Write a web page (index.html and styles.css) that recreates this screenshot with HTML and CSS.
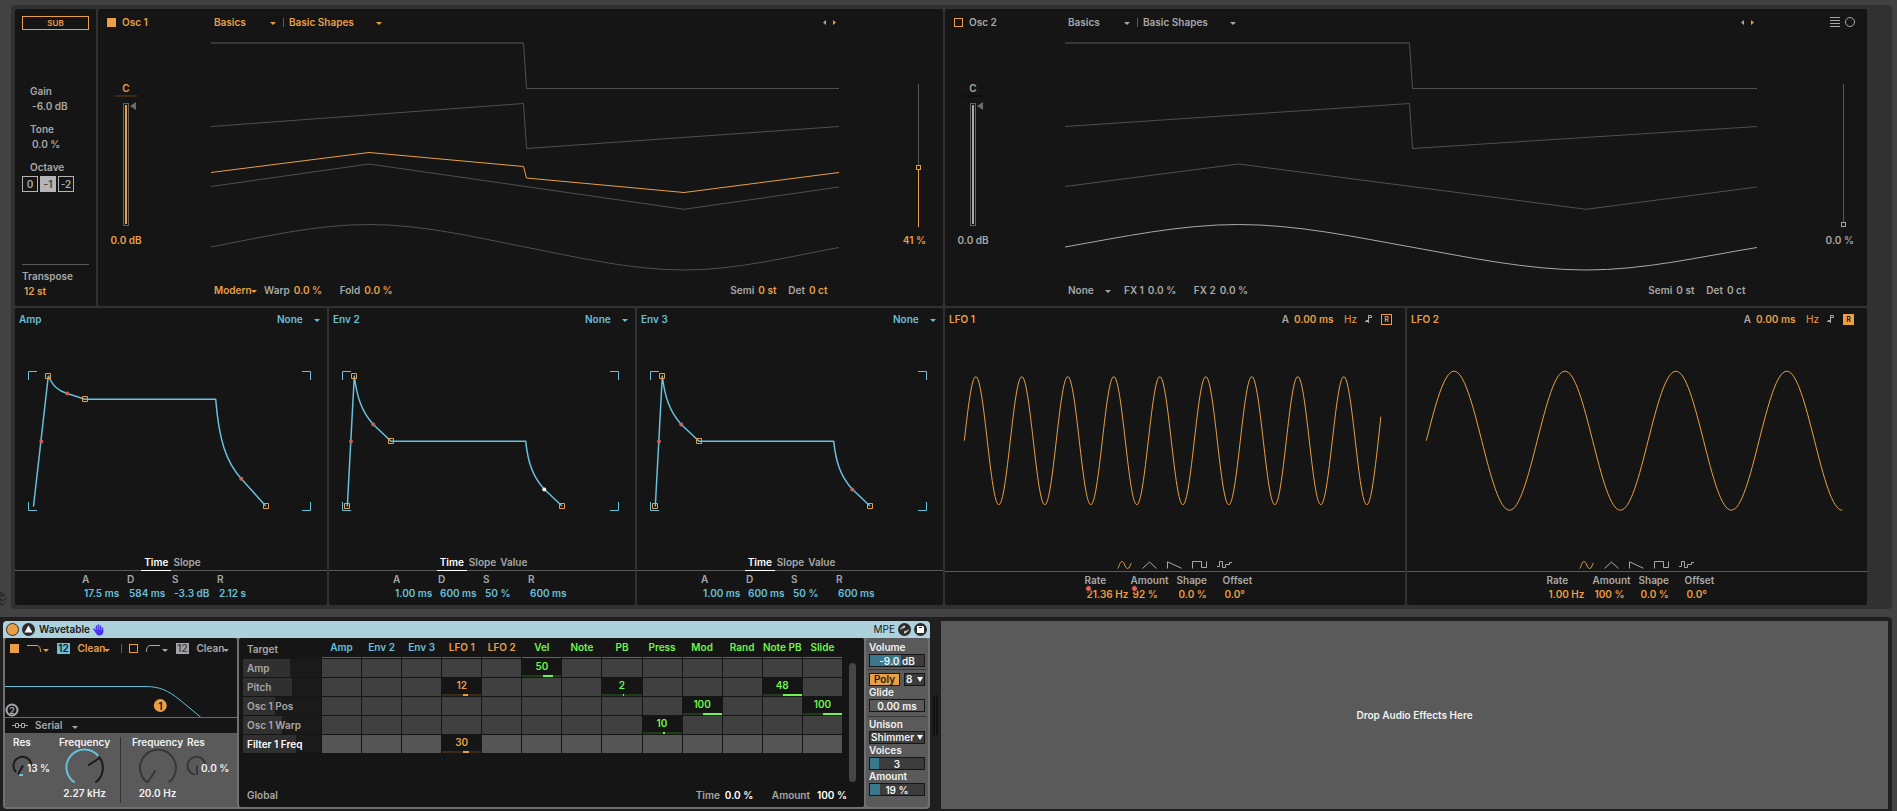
FILE: index.html
```html
<!DOCTYPE html>
<html lang="en">
<head>
<meta charset="utf-8">
<title>Wavetable</title>
<link rel="stylesheet" href="styles.css">
</head>
<body>
<svg class="defs" aria-hidden="true">
  <defs>
    <symbol id="i-sine" viewBox="0 0 15 8"><path d="M.5 7.5C2.500 6 2.500 .5 5 .5S8 7.500 10.500 7.500C13 7.500 13 3 14.500 2"/></symbol>
    <symbol id="i-tri" viewBox="0 0 15 8"><path d="M.5 7.5L7.5 1L14.5 7.5"/></symbol>
    <symbol id="i-saw" viewBox="0 0 15 8"><path d="M.5 7.5V.8L14.5 7.3"/></symbol>
    <symbol id="i-square" viewBox="0 0 15 8"><path d="M.5 7.5V.5H9.5V6.5H14.5V.5"/></symbol>
    <symbol id="i-random" viewBox="0 0 15 8"><path d="M0 5.5H2.5V.5H5.5V6.5H8.5V3.5H12.5V1.5H15"/></symbol>
    <symbol id="i-note" viewBox="0 0 7 8"><path d="M0 6.5H3M1 5.5H3M3.5 8V0M4 .5H6.5M4 2.5H6M6.5 1V3"/></symbol>
    <symbol id="i-prev" viewBox="0 0 3 5"><path d="M3 0V5L0 2.5Z"/></symbol>
    <symbol id="i-next" viewBox="0 0 3 5"><path d="M0 0V5L3 2.5Z"/></symbol>
  </defs>
</svg>

<button class="fold" aria-label="Toggle view"><svg viewBox="0 0 14 14"><path d="M8 5L10 7L13 4M8 9L10 11L13 8"/></svg></button>

<main class="rack">
  <div class="row row-osc">
    <section class="panel sub">
      <button class="sub-btn">SUB</button>
      <div class="sub-params">
        <label>Gain<input class="num" value="-6.0 dB"></label>
        <label>Tone<input class="num" value="0.0 %"></label>
        <div class="octave-label">Octave</div>
      </div>
      <div class="octave"><button>0</button><button class="on">-1</button><button>-2</button></div>
      <label class="transpose">Transpose<input class="num orange" value="12 st"></label>
    </section>

    <section class="panel osc osc1">
      <label class="osc-name"><input type="checkbox" checked>Osc 1</label>
      <div class="osc-head">
        <span class="pick w-cat"><select aria-label="Category"><option>Basics</option></select></span>
        <i class="bar"></i>
        <span class="pick w-shape"><select aria-label="Wavetable"><option>Basic Shapes</option></select></span>
        <div class="nav"><button class="dim" aria-label="Previous"><svg><use href="#i-prev"/></svg></button><button aria-label="Next"><svg><use href="#i-next"/></svg></button></div>
      </div>
      <div></div>
      <div class="gain">
        <span class="pan">C</span>
        <div class="gain-track"><input type="range" class="gain-range" aria-label="Gain" value="100"><i class="gain-mark"></i></div>
        <span>0.0 dB</span>
      </div>
      <svg class="wave" viewBox="0 0 628 241" preserveAspectRatio="none">
        <path class="thick" d="M0 8H312.5"/>
        <path d="M312.5 8L315.5 53.5H628M0 91.5L312.5 68.5L315.5 113.5L628 91.5M0 151.5L158 129L473 174.300L628 152M0 212C52 202 105 189.500 158 189.500S263 202 314 212S420 235 473 235S576 222 628 212.500"/>
        <path class="live" d="M0 137.500L158 117.500L312.500 131.500L315.500 143L473 157.500L628 137.500"/>
      </svg>
      <div class="position"><input type="range" class="pos-range" aria-label="Position" value="41"><span>41 %</span></div>
      <div></div>
      <div class="osc-foot">
        <span class="pick w-mode"><select aria-label="Effect mode"><option>Modern</option></select></span>
        <label>Warp<input class="num" value="0.0 %"></label>
        <label>Fold<input class="num" value="0.0 %"></label>
        <div class="tune"><label>Semi<input class="num" value="0 st"></label><label>Det<input class="num" value="0 ct"></label></div>
      </div>
      <div></div>
    </section>

    <section class="panel osc osc2">
      <label class="osc-name"><input type="checkbox">Osc 2</label>
      <div class="osc-head">
        <span class="pick w-cat"><select aria-label="Category"><option>Basics</option></select></span>
        <i class="bar"></i>
        <span class="pick w-shape"><select aria-label="Wavetable"><option>Basic Shapes</option></select></span>
        <div class="nav"><button class="dim" aria-label="Previous"><svg><use href="#i-prev"/></svg></button><button class="orange" aria-label="Next"><svg><use href="#i-next"/></svg></button></div>
      </div>
      <div class="views">
        <button aria-label="Linear view"><svg viewBox="0 0 10 10"><path d="M0 .5H10M0 3.500H10M0 6.500H10M0 9.500H10"/></svg></button>
        <button aria-label="Polar view"><svg viewBox="0 0 10 10"><circle cx="5" cy="5" r="4.500"/></svg></button>
      </div>
      <div class="gain">
        <span class="pan">C</span>
        <div class="gain-track"><input type="range" class="gain-range" aria-label="Gain" value="100"><i class="gain-mark"></i></div>
        <span>0.0 dB</span>
      </div>
      <svg class="wave" viewBox="0 0 692 241" preserveAspectRatio="none">
        <path class="thick" d="M0 8H344.500"/>
        <path d="M344.500 8L347.500 53.500H692M0 91.500L344.500 68.500L347.500 113.500L692 91.500M0 151.500L173.500 129L521 174.300L692 152"/>
        <path class="live" d="M0 212C57 202 115 189.500 173.500 189.500S290 202 346 212S463 235 521 235S634 222 692 212.500"/>
      </svg>
      <div class="position"><input type="range" class="pos-range" aria-label="Position" value="0"><span>0.0 %</span></div>
      <div></div>
      <div class="osc-foot">
        <span class="pick w-mode"><select aria-label="Effect mode"><option>None</option></select></span>
        <label>FX 1<input class="num" value="0.0 %"></label>
        <label>FX 2<input class="num" value="0.0 %"></label>
        <div class="tune"><label>Semi<input class="num" value="0 st"></label><label>Det<input class="num" value="0 ct"></label></div>
      </div>
      <div></div>
    </section>
  </div>

  <div class="row row-mod">
    <section class="panel mod env">
      <header><h2>Amp</h2><span class="pick w-mode"><select aria-label="Amp loop mode"><option>None</option></select></span></header>
      <svg class="graph" viewBox="0 0 312 222" preserveAspectRatio="none">
        <path d="M13.500 50V41.500H22M287 41.500H295.500V50M295.500 172V180.500H287M22 180.500H13.500V172"/>
        <path class="curve" d="M18.500 176.500L33.300 46C38 56 43 61 52.300 63.500L70 69.300H200.700C204 110 211 132 226.300 148.700L250.700 176"/>
        <g class="dots"><circle cx="26.300" cy="111.500" r="2"/><circle cx="52.300" cy="63.500" r="2"/><circle cx="226.300" cy="148.700" r="2"/></g>
        <path class="nodes" d="M30.500 43.500h5v5h-5zM67.500 66.500h5v5h-5zM248.500 173.500h5v5h-5z"/>
      </svg>
      <nav><button class="on">Time</button><button>Slope</button></nav>
      <footer>
        <label>A<input class="num" value="17.5 ms"></label><label>D<input class="num" value="584 ms"></label><label>S<input class="num" value="-3.3 dB"></label><label>R<input class="num" value="2.12 s"></label>
      </footer>
    </section>
    <section class="panel mod env">
      <header><h2>Env 2</h2><span class="pick w-mode"><select aria-label="Env 2 loop mode"><option>None</option></select></span></header>
      <svg class="graph" viewBox="0 0 306 222" preserveAspectRatio="none">
        <path d="M13.500 50V41.500H22M281 41.500H289.500V50M289.500 172V180.500H281M22 180.500H13.500V172"/>
        <path class="curve" d="M18.300 176.500L25.300 46C28 68 33 82 44.300 94.500L62 111.300H196.700C199 133 204 147 215.300 159.300L233 176"/>
        <g class="dots"><circle cx="22" cy="111.500" r="2"/><circle cx="44.300" cy="94.500" r="2"/><circle class="hot" cx="215.300" cy="159.500" r="2"/></g>
        <path class="nodes" d="M15.500 173.500h5v5h-5zM22.500 43.500h5v5h-5zM59.500 108.500h5v5h-5zM230.500 173.500h5v5h-5z"/>
      </svg>
      <nav><button class="on">Time</button><button>Slope</button><button>Value</button></nav>
      <footer>
        <label>A<input class="num" value="1.00 ms"></label><label>D<input class="num" value="600 ms"></label><label>S<input class="num" value="50 %"></label><label>R<input class="num" value="600 ms"></label>
      </footer>
    </section>
    <section class="panel mod env">
      <header><h2>Env 3</h2><span class="pick w-mode"><select aria-label="Env 3 loop mode"><option>None</option></select></span></header>
      <svg class="graph" viewBox="0 0 306 222" preserveAspectRatio="none">
        <path d="M13.500 50V41.500H22M281 41.500H289.500V50M289.500 172V180.500H281M22 180.500H13.500V172"/>
        <path class="curve" d="M18.300 176.500L25.300 46C28 68 33 82 44.300 94.500L62 111.300H196.700C199 133 204 147 215.300 159.300L233 176"/>
        <g class="dots"><circle cx="22" cy="111.500" r="2"/><circle cx="44.300" cy="94.500" r="2"/><circle cx="215.300" cy="159.500" r="2"/></g>
        <path class="nodes" d="M15.500 173.500h5v5h-5zM22.500 43.500h5v5h-5zM59.500 108.500h5v5h-5zM230.500 173.500h5v5h-5z"/>
      </svg>
      <nav><button class="on">Time</button><button>Slope</button><button>Value</button></nav>
      <footer>
        <label>A<input class="num" value="1.00 ms"></label><label>D<input class="num" value="600 ms"></label><label>S<input class="num" value="50 %"></label><label>R<input class="num" value="600 ms"></label>
      </footer>
    </section>
    <section class="panel mod lfo">
      <header><h2>LFO 1</h2><label>A<input class="num" value="0.00 ms"></label><button class="hz">Hz</button><button class="note" aria-label="Sync"><svg><use href="#i-note"/></svg></button><button class="retrig">R</button></header>
      <svg class="graph" viewBox="0 0 460 222" preserveAspectRatio="none">
        <path class="lfo-line" d="M19.300 110.700c3.750 -32.800 7.340 -64 11.500 -64s7.750 31.200 11.500 64s7.340 64 11.500 64s7.750 -31.200 11.500 -64s7.340 -64 11.500 -64s7.750 31.200 11.500 64s7.340 64 11.500 64s7.750 -31.200 11.500 -64s7.340 -64 11.500 -64s7.750 31.200 11.500 64s7.340 64 11.500 64s7.750 -31.200 11.500 -64s7.340 -64 11.500 -64s7.750 31.200 11.500 64s7.340 64 11.500 64s7.750 -31.200 11.500 -64s7.340 -64 11.500 -64s7.750 31.200 11.500 64s7.340 64 11.500 64s7.750 -31.200 11.500 -64s7.340 -64 11.500 -64s7.750 31.200 11.500 64s7.340 64 11.500 64s7.750 -31.200 11.500 -64s7.340 -64 11.500 -64s7.750 31.200 11.500 64s7.340 64 11.500 64s7.750 -31.200 11.500 -64s7.340 -64 11.500 -64s7.750 31.200 11.500 64s7.340 64 11.500 64s7.750 -31.200 11.500 -64s7.340 -64 11.500 -64s7.750 31.200 11.500 64s7.340 64 11.500 64s7.750 -31.200 11.500 -64l2.500 -24"/>
      </svg>
      <div class="shapes"><button class="on" aria-label="Sine"><svg><use href="#i-sine"/></svg></button><button aria-label="Triangle"><svg><use href="#i-tri"/></svg></button><button aria-label="Saw"><svg><use href="#i-saw"/></svg></button><button aria-label="Square"><svg><use href="#i-square"/></svg></button><button aria-label="Random"><svg><use href="#i-random"/></svg></button></div>
      <footer>
        <label class="auto">Rate<input class="num" value="21.36 Hz"></label><label class="auto">Amount<input class="num" value="92 %"></label><label>Shape<input class="num" value="0.0 %"></label><label>Offset<input class="num" value="0.0°"></label>
      </footer>
    </section>
    <section class="panel mod lfo">
      <header><h2>LFO 2</h2><label>A<input class="num" value="0.00 ms"></label><button class="hz">Hz</button><button class="note" aria-label="Sync"><svg><use href="#i-note"/></svg></button><button class="retrig on">R</button></header>
      <svg class="graph" viewBox="0 0 460 222" preserveAspectRatio="none">
        <path class="lfo-line" d="M19.300 110.700c9.040 -35.700 17.700 -69.500 27.730 -69.500s18.690 33.800 27.730 69.500s17.700 69.500 27.730 69.500s18.690 -33.800 27.730 -69.500s17.700 -69.500 27.730 -69.500s18.690 33.800 27.730 69.500s17.700 69.500 27.730 69.500s18.690 -33.800 27.730 -69.500s17.700 -69.500 27.730 -69.500s18.690 33.800 27.730 69.500s17.700 69.500 27.730 69.500s18.690 -33.800 27.730 -69.500s17.700 -69.500 27.730 -69.500s18.690 33.800 27.730 69.500s17.700 69.500 27.730 69.500"/>
      </svg>
      <div class="shapes"><button class="on" aria-label="Sine"><svg><use href="#i-sine"/></svg></button><button aria-label="Triangle"><svg><use href="#i-tri"/></svg></button><button aria-label="Saw"><svg><use href="#i-saw"/></svg></button><button aria-label="Square"><svg><use href="#i-square"/></svg></button><button aria-label="Random"><svg><use href="#i-random"/></svg></button></div>
      <footer>
        <label>Rate<input class="num" value="1.00 Hz"></label><label>Amount<input class="num" value="100 %"></label><label>Shape<input class="num" value="0.0 %"></label><label>Offset<input class="num" value="0.0°"></label>
      </footer>
    </section>
  </div>
</main>

<div class="dock">
  <section class="device">
    <header class="title">
      <button class="power" aria-label="Device on"></button>
      <button class="round" aria-label="Unfold"><svg viewBox="0 0 13 13"><path class="solid" d="M6.500 2.500L10.500 9.500H2.500Z"/></svg></button>
      <h1>Wavetable</h1>
      <svg class="hand" viewBox="0 0 11 12"><path d="M3.500 7V2M5.500 6V1M7.500 6.500V2M9.500 8V4M1 5L3.500 8.500"/><path class="palm" d="M2.700 6H10.200V8C10.200 10 9 11.500 7 11.500H5.800C4.500 11.500 3.500 10.500 2.700 8.500Z"/></svg>
      <span class="mpe">MPE</span>
      <button class="round" aria-label="Hot swap"><svg viewBox="0 0 13 13"><path d="M2.800 6.500C3 4.500 4.500 3.500 6.500 4L6 2.500M6.500 4L5 5.500M10.200 6.500C10 8.500 8.500 9.500 6.500 9L7 10.500M6.500 9L8 7.500"/></svg></button>
      <button class="round" aria-label="Save preset"><svg viewBox="0 0 13 13"><path class="solid" d="M3 3H9L10 4V10H3Z"/><path class="slot" d="M5 4.500H8"/></svg></button>
    </header>
    <div class="device-body">
      <div class="filters">
        <div class="filter-head">
          <input type="checkbox" checked aria-label="Filter 1">
          <span class="pick w-type orange"><svg class="ftype" viewBox="0 0 14 8"><path d="M0 .5H9C12 .5 13.500 2 13.500 7"/></svg><select aria-label="Filter 1 type"><option></option></select></span>
          <button class="slope">12</button>
          <span class="pick w-clean orange"><select aria-label="Filter 1 circuit"><option>Clean</option></select></span>
          <i class="bar"></i>
          <input type="checkbox" aria-label="Filter 2">
          <span class="pick w-type"><svg class="ftype" viewBox="0 0 14 8"><path d="M14 .5H5C2 .5 .5 2 .5 7"/></svg><select aria-label="Filter 2 type"><option></option></select></span>
          <button class="slope off">12</button>
          <span class="pick w-clean"><select aria-label="Filter 2 circuit"><option>Clean</option></select></span>
        </div>
        <svg class="response" viewBox="0 0 232 58" preserveAspectRatio="none">
          <path d="M0 27.500H140C155 27.500 163 31.500 175 41L195.500 58"/>
          <circle class="f1" cx="155.300" cy="46.500" r="6.500"/><text x="155.300" y="50.500">1</text>
          <circle class="f2" cx="7" cy="51" r="5.500"/><text class="t2" x="7" y="54.500">2</text>
        </svg>
        <div class="routing">
          <svg viewBox="0 0 16 5"><path d="M0 2.500H3M6 2.500H9.500M13 2.500H16M3.500 .5h3v4h-3zM9.500 .5h3v4h-3z"/></svg>
          <span class="pick w-route"><select aria-label="Routing"><option>Serial</option></select></span>
        </div>
        <div class="knobs">
          <div class="res"><span>Res</span><div><svg viewBox="0 0 20 20"><path d="M3 16A9 9 0 1 1 18.500 10"/><path class="lit" d="M6 19H10"/><path d="M10 9.500L5 18.500"/></svg><b>13 %</b></div></div>
          <div class="freq"><span>Frequency</span><svg viewBox="0 0 38 38"><path d="M29.400 33.500A18 18 0 0 0 32.500 7.200"/><path class="lit" d="M8.600 33.500A18 18 0 1 1 32.500 7.200"/><path d="M22 16.500L33.500 9"/></svg><b>2.27 kHz</b></div>
          <i></i>
          <div class="freq off"><span>Frequency</span><svg viewBox="0 0 38 38"><path d="M8.600 33.500A18 18 0 1 1 29.400 33.500M8.600 33.500L16.500 21.500"/></svg><b>20.0 Hz</b></div>
          <div class="res off"><span>Res</span><div><svg viewBox="0 0 20 20"><path d="M8 18.700A9 9 0 1 1 18.500 10M10 9.500V19"/></svg><b>0.0 %</b></div></div>
        </div>
      </div>

      <div class="matrix">
        <div class="matrix-main">
          <table>
            <thead><tr><th class="target">Target</th><th class="b">Amp</th><th class="b">Env 2</th><th class="b">Env 3</th><th class="o">LFO 1</th><th class="o">LFO 2</th><th class="g">Vel</th><th class="g">Note</th><th class="g">PB</th><th class="g">Press</th><th class="g">Mod</th><th class="g">Rand</th><th class="g">Note PB</th><th class="g">Slide</th></tr></thead>
            <tbody>
              <tr><th style="--w:47px">Amp</th><td></td><td></td><td></td><td></td><td></td><td class="g" style="--v:10px">50</td><td></td><td></td><td></td><td></td><td></td><td></td><td></td></tr>
              <tr><th style="--w:49px">Pitch</th><td></td><td></td><td></td><td class="o" style="--v:5px">12</td><td></td><td></td><td></td><td class="g" style="--v:1px">2</td><td></td><td></td><td></td><td class="g" style="--v:19px">48</td><td></td></tr>
              <tr><th style="--w:32px">Osc 1 Pos</th><td></td><td></td><td></td><td></td><td></td><td></td><td></td><td></td><td></td><td class="g" style="--v:19px">100</td><td></td><td></td><td class="g" style="--v:19px">100</td></tr>
              <tr><th style="--w:39px">Osc 1 Warp</th><td></td><td></td><td></td><td></td><td></td><td></td><td></td><td></td><td class="g" style="--v:2px">10</td><td></td><td></td><td></td><td></td></tr>
              <tr class="sel"><th style="--w:53px">Filter 1 Freq</th><td></td><td></td><td></td><td class="o" style="--v:6px">30</td><td></td><td></td><td></td><td></td><td></td><td></td><td></td><td></td><td></td></tr>
            </tbody>
          </table>
          <i class="scroll"></i>
        </div>
        <div class="global"><span>Global</span><label>Time<input class="num" value="0.0 %"></label><label>Amount<input class="num last" value="100 %"></label></div>
      </div>

      <div class="controls">
        <label>Volume<input class="box" value="-9.0 dB" style="--f:58%"></label>
        <hr>
        <div class="poly"><button>Poly</button><span class="drop"><select aria-label="Voice count"><option>8</option></select></span></div>
        <label>Glide<input class="box flat" value="0.00 ms"></label>
        <hr class="low">
        <label>Unison<span class="drop"><select><option>Shimmer</option></select></span></label>
        <label>Voices<input class="box" value="3" style="--f:17%"></label>
        <label>Amount<input class="box" value="19 %" style="--f:19%"></label>
      </div>
    </div>
  </section>
  <div class="meter"></div>
  <section class="dropzone">Drop Audio Effects Here</section>
</div>
</body>
</html>
```

FILE: styles.css
```css
:root {
  --orange: #e99f46;
  --blue: #67c0dc;
  --green: #6ff64e;
  --grey: #a8a8a8;
  --line: #5a5a5a;
  --panel: #151515;
}
* { box-sizing: border-box; }
body {
  margin: 0;
  height: 100vh;
  display: flex;
  flex-direction: column;
  padding-top: 5px;
  background: #424242;
  color: var(--grey);
  font: 600 10px/15px Inter, "Liberation Sans", sans-serif;
}
button, input, select {
  font: inherit;
  color: inherit;
  margin: 0;
  padding: 0;
  border: 0;
  background: none;
  border-radius: 0;
  min-width: 0;
}
button { display: block; }
h1, h2 { margin: 0; font: inherit; }
svg { display: block; fill: none; stroke: currentColor; overflow: visible; }
.defs { position: absolute; width: 0; height: 0; }
.orange { color: var(--orange); }

.fold {
  position: absolute;
  left: -7px;
  top: 592px;
  width: 14px;
  height: 14px;
  border-radius: 50%;
  background: #303030;
  color: #585858;
}
.fold svg { width: 14px; height: 14px; }

/* drop-downs with a small caret */
.pick { position: relative; display: flex; align-items: center; }
.pick select { appearance: none; flex: 1; height: 15px; outline: 0; }
.pick::after {
  content: "";
  position: absolute;
  right: 0;
  top: 50%;
  border: 3px solid transparent;
  border-top-color: currentColor;
  border-bottom: 0;
  pointer-events: none;
}
.w-cat { width: 62px; }
.w-shape { width: 93px; }
.w-mode { width: 43px; }
.w-type { width: 22px; }
.w-clean { width: 33px; }
.w-route { width: 43px; }

input[type="checkbox"] {
  appearance: none;
  width: 9px;
  height: 9px;
  border: 1px solid var(--orange);
}
input[type="checkbox"]:checked { background: var(--orange); }
.bar { width: 1px; height: 9px; background: var(--line); }

/* rack */
.rack {
  flex: 1;
  display: flex;
  flex-direction: column;
  gap: 2px;
  margin: 0 5px 0 11px;
  padding: 4px 25px 4px 4px;
  background: #313131;
  border-radius: 4px;
}
.row { flex: 1 1 0; min-height: 260px; display: grid; grid-template-rows: minmax(0, 1fr); gap: 2px; }
.row-osc { grid-template-columns: 81px 845fr 922fr; }
.row-mod { grid-template-columns: 312fr 306fr 306fr 460fr 460fr; }
.panel { background: var(--panel); border-radius: 2px; min-width: 0; }

.sub { display: flex; flex-direction: column; padding: 7px; }
.sub-btn {
  height: 14px;
  border: 1px solid var(--orange);
  color: var(--orange);
  font-size: 8px;
  line-height: 12px;
}
.sub-params { margin-top: 54px; padding-left: 8px; }
.sub label { display: block; }
.sub label .num { display: block; width: 100%; padding-left: 2px; height: 15px; }
.sub-params label { margin-bottom: 8px; }
.octave { display: flex; gap: 2px; margin-top: 1px; }
.octave button { width: 16px; height: 16px; border: 1px solid #b4b4b4; line-height: 14px; }
.octave .on { background: #b4b4b4; color: #444; }
.transpose { margin-top: auto; border-top: 1px solid var(--line); padding-top: 4px; }

.osc {
  display: grid;
  grid-template-columns: var(--left) 1fr var(--right);
  grid-template-rows: 26px minmax(0, 1fr) 30px;
}
.osc1 { --left: 113px; --right: 104px; --end: 17px; --nudge: 5px; --lead: 7px; --hue: var(--orange); --under: #3a2a17; }
.osc2 { --left: 120px; --right: 110px; --end: 13px; --nudge: 8px; --lead: 13px; --hue: var(--grey); --under: #0e0e0e; }
.osc-name { display: flex; align-items: center; gap: 6px; padding-left: 9px; color: var(--hue); }
.osc-head { display: flex; align-items: center; padding: 0 3px; color: var(--hue); }
.osc-head .bar { margin: 0 5px 0 7px; }
.nav { margin-left: auto; display: flex; gap: 7px; }
.nav svg { width: 3px; height: 5px; fill: currentColor; stroke: none; }
.nav .dim { color: var(--grey); }
.views { display: flex; align-items: center; justify-content: flex-end; gap: 5px; padding-right: 12px; }
.views svg { width: 10px; height: 10px; }

.gain {
  width: 56px;
  padding: 46px 0 28px;
  display: flex;
  flex-direction: column;
  align-items: center;
  color: var(--hue);
}
.pan { width: 22px; height: 16px; text-align: center; border-bottom: 2px solid var(--under); }
.gain-track { position: relative; flex: 1; min-height: 0; display: flex; margin: 6px 0 7px; }
.gain-range {
  appearance: none;
  writing-mode: vertical-lr;
  direction: rtl;
  width: 6px;
  height: 100%;
  border: 1px solid #636363;
  padding: 1px;
  background: var(--hue) content-box;
}
.gain-range::-webkit-slider-thumb { appearance: none; width: 2px; height: 1px; background: var(--hue); }
.gain-mark {
  position: absolute;
  left: 7px;
  top: -1px;
  border: 4px solid transparent;
  border-right: 6px solid #696969;
  border-left: 0;
}
.wave { width: 100%; height: 100%; min-height: 0; color: #4f4f4f; }
.wave path, .graph path { vector-effect: non-scaling-stroke; }
.wave .thick { stroke-width: 2; stroke: #373737; }
.wave .live { stroke: var(--hue); }
.position {
  display: flex;
  flex-direction: column;
  align-items: flex-end;
  padding: 49px var(--end) 28px 0;
  color: var(--hue);
}
.pos-range {
  appearance: none;
  writing-mode: vertical-lr;
  direction: rtl;
  flex: 1;
  min-height: 0;
  width: 5px;
  margin: 0 var(--nudge) 6px 0;
  background: linear-gradient(#565656, #565656) center / 1px 100% no-repeat;
}
.osc1 .pos-range { background-image: linear-gradient(#565656 59%, var(--orange) 59%); }
.pos-range::-webkit-slider-thumb {
  appearance: none;
  width: 5px;
  height: 5px;
  border: 1px solid var(--hue);
  background: var(--panel);
}
.osc-foot { display: flex; align-items: center; padding: 0 0 2px 3px; }
.osc-foot .pick { color: var(--hue); margin-right: var(--lead); }
.osc-foot label { display: flex; gap: 4px; align-items: center; }
.osc-foot .num { width: 46px; color: var(--hue); }
.tune { margin-left: auto; display: flex; }
.osc-foot .tune .num { width: 30px; }

/* modulators */
.mod { display: flex; flex-direction: column; }
.mod header { display: flex; align-items: center; height: 22px; padding: 0 7px 0 4px; }
.mod h2 { flex: 1; }
.env header { color: var(--blue); }
.graph { flex: 1; width: 100%; height: 0; min-height: 0; color: var(--blue); }
.curve { stroke-width: 1.5; stroke-linejoin: round; }
.dots { fill: #c9605c; stroke: none; }
.dots .hot { fill: #fff; }
.nodes { stroke: var(--orange); }
.env nav { display: flex; justify-content: center; height: 18px; padding-left: 2px; }
.env nav button { padding: 2px 2px 0; height: 19px; position: relative; line-height: 15px; }
.env nav .on { padding: 2px 3px 0; color: #fff; border-bottom: 1px solid #fff; }
.mod footer {
  display: flex;
  justify-content: center;
  height: 35px;
  padding: 1px 0 0 2px;
  border-top: 1px solid var(--line);
}
.mod footer label { width: 45px; line-height: 14px; position: relative; }
.mod footer .num { display: block; width: 100%; height: 13px; padding-left: 2px; color: var(--blue); }
.mod.lfo header { padding-right: 13px; }
.lfo h2, .lfo .hz { color: var(--orange); }
.lfo header label { display: flex; gap: 5px; }
.lfo header .num { width: 50px; color: var(--orange); height: 15px; }
.hz { font-weight: 400; }
.note { margin: 0 9px 0 8px; }
.note svg { width: 7px; height: 8px; }
.retrig { width: 11px; height: 11px; border: 1px solid var(--orange); color: var(--orange); font-size: 7px; line-height: 9px; }
.retrig.on { background: var(--orange); color: #111; }
.lfo .graph { color: var(--orange); }
.shapes { height: 19px; padding: 6px 2px 0 0; display: flex; justify-content: center; gap: 10px; }
.shapes svg { width: 15px; height: 8px; }
.shapes .on { color: var(--orange); }
.mod.lfo footer { height: 34px; padding-left: 3px; }
.mod.lfo footer label { width: 46px; }
.mod.lfo footer .num { color: var(--orange); }
.auto::after {
  content: "";
  position: absolute;
  left: 0;
  top: 12px;
  width: 5px;
  height: 5px;
  border-radius: 50%;
  background: #d8655a;
  border: 1px solid var(--panel);
}

/* device dock */
.dock {
  display: grid;
  grid-template-columns: 927fr 11px 947fr;
  margin: 8px 5px 0 0;
  padding: 4px 4px 2px 3px;
  background: #1f1f1f;
  border-radius: 0 4px 0 0;
}
.device { background: #707070; border-radius: 4px; overflow: hidden; color: #f2f2f2; }
.title { display: flex; align-items: center; height: 17px; padding: 0 3px; background: #aed2dd; color: #1a1a1a; gap: 3px; }
.title h1 { margin-left: 1px; }
.power, .round { width: 13px; height: 13px; border-radius: 50%; background: #2b2b2b; color: #fff; }
.power { background: var(--orange); border: 1px solid #2b2b2b; }
.solid { fill: currentColor; stroke: none; }
.slot { stroke: #2b2b2b; }
.hand { width: 11px; height: 12px; stroke: #4a35e8; stroke-width: 1.5; stroke-linecap: round; }
.palm { fill: #4a35e8; stroke: none; }
.mpe { margin-left: auto; font-weight: 400; }
.device-body { display: grid; grid-template-columns: 232px 1fr 62px; gap: 2px; padding: 0 2px 2px; height: 171px; }

.filters { display: flex; flex-direction: column; background: var(--panel); color: var(--grey); border-radius: 2px; overflow: hidden; }
.filter-head { display: flex; align-items: center; height: 21px; padding: 0 8px 0 5px; }
.ftype { position: absolute; left: 0; width: 14px; height: 8px; }
.filter-head .w-type { margin: 0 8px; height: 15px; }
.filter-head .w-clean { margin-left: 7px; }
.slope { width: 14px; height: 11px; line-height: 11px; background: var(--blue); color: #1a1a1a; }
.slope.off { background: #a4a4a4; color: #444; }
.filter-head .bar { margin: 0 7px 0 11px; }
.response { flex: 1; width: 100%; height: 0; color: var(--blue); overflow: hidden; }
.response .f1 { fill: var(--orange); stroke: none; }
.response .f2 { stroke: var(--grey); stroke-width: 2; }
.response text { font-size: 10px; fill: #111; stroke: none; text-anchor: middle; }
.response .t2 { fill: var(--grey); font-size: 9px; }
.routing { display: flex; align-items: center; gap: 7px; height: 16px; padding-left: 7px; border-top: 1px solid #6a6a6a; }
.routing > svg { width: 16px; height: 5px; }
.knobs {
  display: grid;
  grid-template-columns: 44px 71px 1px 66px 49px;
  height: 74px;
  padding-top: 2px;
  background: #5a5a5a;
  color: #f2f2f2;
}
.knobs > i { background: #333; margin: 2px 0 4px; }
.knobs svg { stroke: #1b1b1b; stroke-width: 2; }
.knobs .lit { stroke: var(--blue); }
.knobs .off svg { stroke: #373737; }
.knobs b { font-weight: 600; white-space: nowrap; }
.freq { display: flex; flex-direction: column; align-items: center; }
.freq.off { padding-left: 7px; }
.freq svg { width: 38px; height: 38px; margin: -1px 0 -1px; }
.res { padding-left: 8px; }
.res.off { padding-left: 0; }
.res div { display: flex; align-items: flex-end; }
.res svg { flex: none; width: 20px; height: 20px; margin-top: 2px; }
.res b { margin: 11px 0 0 -6px; }

.matrix { display: flex; flex-direction: column; background: var(--panel); border-radius: 2px; color: var(--grey); padding: 0 8px 4px 3px; }
.matrix-main { flex: 1; display: flex; align-items: flex-start; gap: 6px; }
table { flex: 1; table-layout: fixed; border-collapse: separate; border-spacing: 1px; width: 0; }
th, td { padding: 0; font-weight: 600; height: 18px; line-height: 15px; vertical-align: top; }
th:first-child { width: 78px; text-align: left; padding-left: 4px; }
tbody th { padding-top: 2px; background: linear-gradient(90deg, #303030 var(--w), #1a1a1a var(--w)); }
thead th { height: 19px; padding: 1px 0 2px; border-bottom: 1px solid transparent; white-space: nowrap; }
thead .target { padding-top: 3px; padding-bottom: 0; }
thead .b { color: var(--blue); border-color: #2f7287; }
thead .o { color: var(--orange); border-color: #8a5a26; }
thead .g { color: var(--green); border-color: #368a27; }
td { background: #404040; text-align: center; }
.sel td { background: #555; }
.sel th { color: #fff; }
tbody .o, tbody .g {
  background:
    linear-gradient(var(--hue), var(--hue)) calc(50% + var(--v) / 2) 100% / var(--v) 2px no-repeat,
    linear-gradient(var(--dim), var(--dim)) 0 100% / 100% 2px no-repeat,
    var(--panel);
  color: var(--hue);
}
/* positive amounts grow rightwards from the middle of the cell */
tbody .o, tbody .g { background-position: left calc(50% + 1px + var(--v) / 2) bottom, left bottom, 0 0; }
tbody .o { --hue: var(--orange); --dim: #3a2a17; }
tbody .g { --hue: var(--green); --dim: #1f3d18; }
td[style*="19px"] { background-position: right bottom, left bottom, 0 0; }
tbody td.g[style*="19px"] { background-position: right bottom, left bottom, 0 0; }
.scroll { width: 7px; height: 119px; margin-top: 25px; border-radius: 4px; background: #464646; }
.global { display: flex; padding-left: 5px; }
.global span { flex: 1; }
.global label { display: flex; gap: 5px; }
.global .num { width: 47px; height: 15px; color: #fff; }
.global .last { width: 39px; margin-left: 2px; }

.controls { background: #5a5a5a; border-radius: 4px; padding: 3px; line-height: 13px; }
.controls label { display: block; }
.controls hr { margin: 2px -1px 3px; border: 0; height: 1px; background: #383838; }
.controls .low { margin: 4px -1px 1px; }
.box, .drop, .poly button { display: block; width: 100%; height: 13px; line-height: 11px; border: 1px solid #161616; text-align: center; }
.box { background: linear-gradient(90deg, #39788b var(--f), #3c3c3c var(--f)); }
.box.flat { background: #5a5a5a; }
.drop { position: relative; background: #3c3c3c; }
.drop select { appearance: none; display: block; width: 100%; height: 11px; padding-left: 1px; line-height: 11px; }
.drop::after { content: ""; position: absolute; right: 1px; top: 3px; border: 3px solid transparent; border-top: 5px solid #fff; border-bottom: 0; pointer-events: none; }
.poly { display: grid; grid-template-columns: 31px 21px; justify-content: space-between; }
.poly button { background: var(--orange); color: #1a1a1a; }

.meter {
  margin: 74px 3px;
  background: linear-gradient(90deg, #111 2px, transparent 2px 3px, #111 3px);
  height: 40px;
}
.dropzone { display: grid; place-items: center; background: #5a5a5a; color: #f2f2f2; }
```
